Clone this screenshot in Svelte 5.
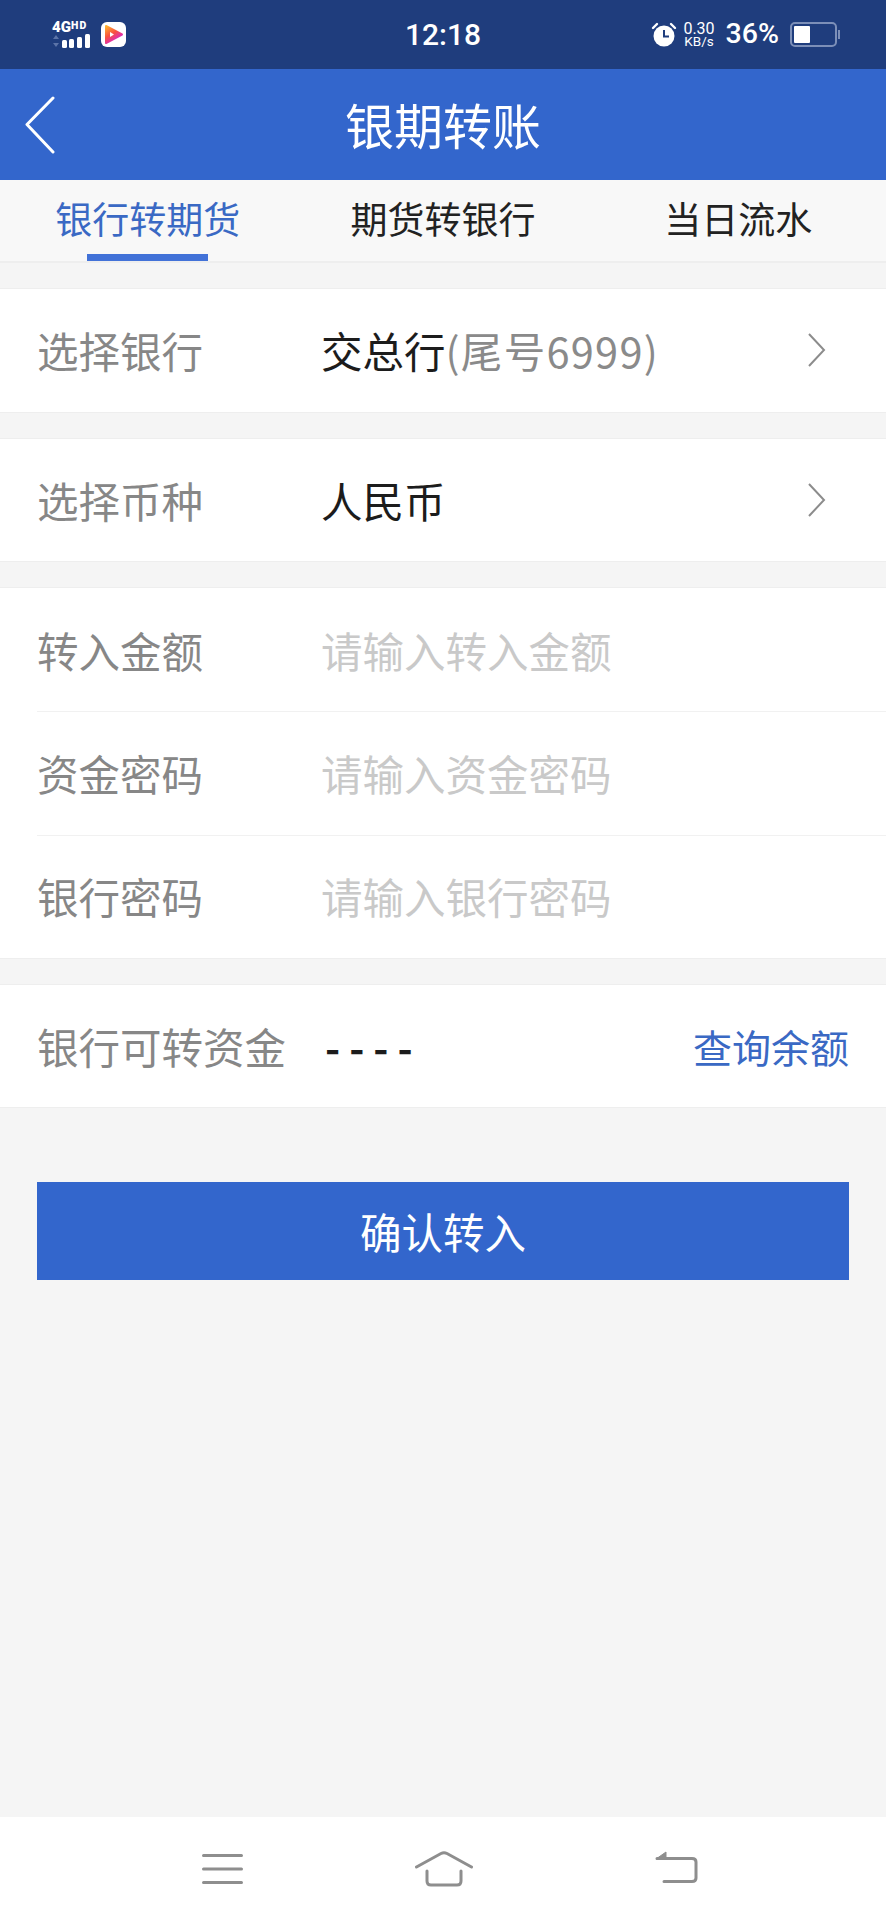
<script>
	const tabs = ['银行转期货', '期货转银行', '当日流水'];
	const inputs = [
		{ label: '转入金额', hint: '请输入转入金额' },
		{ label: '资金密码', hint: '请输入资金密码' },
		{ label: '银行密码', hint: '请输入银行密码' }
	];
</script>

<div class="page">
	<div class="status">
		<div class="status-left">
			<div class="signal">
				<div class="net">4G<sup>HD</sup></div>
				<svg width="39" height="14" viewBox="0 0 39 14">
					<path d="M4 1 L7 5 H1 Z M4 13 L1 9 H7 Z" fill="#5c74a8" />
					<rect x="10" y="6" width="5" height="8" rx="1.5" fill="#fff" />
					<rect x="17" y="5" width="5" height="9" rx="1.5" fill="#fff" />
					<rect x="25" y="3" width="5" height="11" rx="1.5" fill="#fff" />
					<rect x="33" y="0" width="5" height="14" rx="1.5" fill="#fff" />
				</svg>
			</div>
			<svg class="app" width="25" height="25" viewBox="0 0 25 25">
				<defs>
					<linearGradient id="play" x1="0" y1="0" x2="0.6" y2="1">
						<stop offset="0" stop-color="#ffb52e" />
						<stop offset="0.5" stop-color="#f9503f" />
						<stop offset="1" stop-color="#d21fe0" />
					</linearGradient>
				</defs>
				<rect width="25" height="25" rx="6" fill="#fff" />
				<path d="M5 4 L21 12.5 L5 21 Z" fill="url(#play)" stroke="url(#play)" stroke-width="2" stroke-linejoin="round" />
				<path d="M9 10 L13 12.5 L9 15 Z" fill="#fff" />
			</svg>
		</div>
		<div class="time">12:18</div>
		<div class="status-right">
			<svg width="26" height="25" viewBox="0 0 26 25">
				<circle cx="13" cy="14" r="10.5" fill="#fff" />
				<path d="M13 8 V14.5 H18" fill="none" stroke="#1f3d7d" stroke-width="2" />
				<path d="M2 6 L6 2 M24 6 L20 2" stroke="#fff" stroke-width="2.4" stroke-linecap="round" />
			</svg>
			<div class="speed"><span>0.30</span><span class="unit">KB/s</span></div>
			<div class="pct">36%</div>
			<div class="battery">
				<div class="level"></div>
			</div>
		</div>
	</div>

	<header>
		<svg class="back" width="30" height="58" viewBox="0 0 30 58">
			<path d="M28 2 L2 28.500 L28 56" fill="none" stroke="#fff" stroke-width="3" stroke-linecap="round" stroke-linejoin="round" />
		</svg>
		<h1>银期转账</h1>
	</header>

	<nav class="tabs">
		{#each tabs as tab, i}
			<div class="tab" class:active={i === 0}>{tab}</div>
		{/each}
	</nav>

	<section class="block">
		<div class="row">
			<span class="label">选择银行</span>
			<span class="value">交总行<span class="muted">(尾号6999)</span></span>
			<svg class="more" width="18" height="34" viewBox="0 0 18 34">
				<path d="M1 1 L16 17 L1 33" fill="none" stroke="#8c8c8c" stroke-width="2" />
			</svg>
		</div>
	</section>

	<section class="block">
		<div class="row">
			<span class="label">选择币种</span>
			<span class="value">人民币</span>
			<svg class="more" width="18" height="34" viewBox="0 0 18 34">
				<path d="M1 1 L16 17 L1 33" fill="none" stroke="#8c8c8c" stroke-width="2" />
			</svg>
		</div>
	</section>

	<section class="block">
		{#each inputs as item}
			<div class="row field">
				<span class="label">{item.label}</span>
				<input type="text" placeholder={item.hint} />
			</div>
		{/each}
	</section>

	<section class="block">
		<div class="row">
			<span class="label wide">银行可转资金</span>
			<span class="dashes">----</span>
			<span class="query">查询余额</span>
		</div>
	</section>

	<button class="confirm">确认转入</button>

	<footer>
		<svg class="nav-menu" width="41" height="30" viewBox="0 0 41 30">
			<path d="M1.500 1.500 H39.500 M1.500 15 H39.500 M1.500 28.500 H39.500" stroke="#8e8e8e" stroke-width="3" stroke-linecap="round" />
		</svg>
		<svg class="nav-home" width="58" height="36" viewBox="0 0 58 36">
			<path d="M1.500 16 L26 2.500 Q29 1 32 2.500 L56.500 16" fill="none" stroke="#8e8e8e" stroke-width="3" stroke-linecap="round" />
			<path d="M12 20 V30 Q12 34 16 34 H42 Q46 34 46 30 V20" fill="none" stroke="#8e8e8e" stroke-width="3" stroke-linecap="round" />
		</svg>
		<svg class="nav-back" width="43" height="32" viewBox="0 0 43 32">
			<path d="M1 8 L11 1 V8 Z" fill="#8e8e8e" stroke="#8e8e8e" stroke-linejoin="round" />
			<path d="M2 7.500 H37 Q41 7.500 41 11 V27 Q41 30.500 37 30.500 H9" fill="none" stroke="#8e8e8e" stroke-width="3" stroke-linecap="round" />
		</svg>
	</footer>
</div>

<style>
	:global(body) {
		margin: 0;
		background: #f5f5f5;
	}

	.page {
		display: flex;
		flex-direction: column;
		height: 1920px;
		background: #f5f5f5;
		font-family: "Noto Sans CJK SC", "Noto Sans", sans-serif;
		color: #222;
	}

	/* status bar */
	.status {
		height: 69px;
		flex: none;
		display: grid;
		grid-template-columns: 1fr auto 1fr;
		align-items: center;
		background: #1f3d7d;
		color: #fff;
		font-family: Roboto, sans-serif;
	}

	.status-left {
		display: flex;
		align-items: center;
		gap: 10px;
		padding-left: 52px;
	}

	.signal {
		width: 39px;
		display: flex;
		flex-direction: column;
		margin-top: -1px;
	}

	.net {
		font-size: 15px;
		line-height: 13px;
		font-weight: 900;
		white-space: nowrap;
	}

	.net sup {
		font-size: 10.500px;
		line-height: 0;
		letter-spacing: 1.200px;
		vertical-align: 3px;
	}

	.time {
		font-size: 30px;
		font-weight: 500;
		line-height: 1;
	}

	.status-right {
		display: flex;
		align-items: center;
		justify-content: flex-end;
		padding-right: 49px;
	}

	.speed {
		display: flex;
		flex-direction: column;
		align-items: center;
		margin-left: 6px;
		font-size: 16px;
		line-height: 13px;
	}

	.speed .unit {
		font-size: 13.500px;
	}

	.pct {
		margin-left: 11px;
		font-size: 28.500px;
		font-weight: 500;
		line-height: 1;
	}

	.battery {
		position: relative;
		box-sizing: border-box;
		width: 47px;
		height: 25px;
		margin-left: 11px;
		padding: 2px;
		border: 2px solid #7c8fb8;
		border-radius: 5px;
	}

	.battery::after {
		content: '';
		position: absolute;
		right: -5px;
		top: 6px;
		width: 2px;
		height: 9px;
		background: #7c8fb8;
	}

	.level {
		width: 16px;
		height: 100%;
		background: #fff;
		border-radius: 1px;
	}

	/* title bar */
	header {
		position: relative;
		height: 111px;
		flex: none;
		box-sizing: border-box;
		padding-bottom: 2px;
		display: flex;
		align-items: center;
		justify-content: center;
		background: #3366cc;
	}

	.back {
		position: absolute;
		left: 25px;
		top: 27px;
	}

	h1 {
		margin: 0;
		font-size: 49px;
		font-weight: 400;
		color: #fff;
		line-height: 1;
	}

	/* tabs */
	.tabs {
		height: 83px;
		flex: none;
		display: grid;
		grid-template-columns: repeat(3, 1fr);
		box-sizing: border-box;
		background: #f8f8f8;
		border-bottom: 2px solid #eeeeee;
	}

	.tab {
		position: relative;
		display: flex;
		justify-content: center;
		padding-top: 16px;
		font-size: 37px;
		line-height: 44px;
		color: #222;
	}

	.tab.active {
		color: #3a69c4;
	}

	.tab.active::after {
		content: '';
		position: absolute;
		left: 87px;
		bottom: 0;
		width: 121px;
		height: 7px;
		background: #4272d8;
	}

	/* form */
	.block {
		flex: none;
		margin-top: 25px;
		background: #fff;
		border-top: 1px solid #eeeeee;
		border-bottom: 1px solid #eeeeee;
	}

	.row {
		position: relative;
		display: flex;
		align-items: center;
		box-sizing: border-box;
		height: 122.500px;
		padding: 0 37px;
		font-size: 41.500px;
	}

	.field {
		height: 123.300px;
	}

	.field + .field::before {
		content: '';
		position: absolute;
		left: 37px;
		right: 0;
		top: 0;
		height: 1px;
		background: #f1f1f1;
	}

	.label {
		flex: none;
		width: 284px;
		color: #878787;
	}

	.label.wide {
		width: 288px;
	}

	.value {
		color: #1c1c1c;
	}

	.muted {
		color: #8a8a8a;
		letter-spacing: 1.300px;
	}

	.more {
		position: absolute;
		right: 60px;
		top: 44px;
	}

	input {
		flex: 1;
		min-width: 0;
		padding: 0;
		border: 0;
		outline: 0;
		background: none;
		font: inherit;
		color: #1c1c1c;
	}

	input::placeholder {
		color: #c9c9c9;
		opacity: 1;
	}

	.dashes {
		flex: 1;
		font-size: 41px;
		font-weight: 700;
		letter-spacing: 9px;
		color: #1c1c1c;
	}

	.query {
		font-size: 39px;
		color: #3a69c4;
	}

	.confirm {
		flex: none;
		height: 98px;
		margin: 74px 37px 0;
		padding: 0;
		border: 0;
		background: #3366cc;
		color: #fff;
		font: inherit;
		font-size: 41.500px;
	}

	/* system nav */
	footer {
		margin-top: auto;
		height: 103px;
		flex: none;
		display: flex;
		align-items: flex-start;
		background: #fff;
	}

	.nav-menu {
		margin: 37px 0 0 202px;
	}

	.nav-home {
		margin: 34px 0 0 172px;
	}

	.nav-back {
		margin: 34px 0 0 182px;
	}
</style>
